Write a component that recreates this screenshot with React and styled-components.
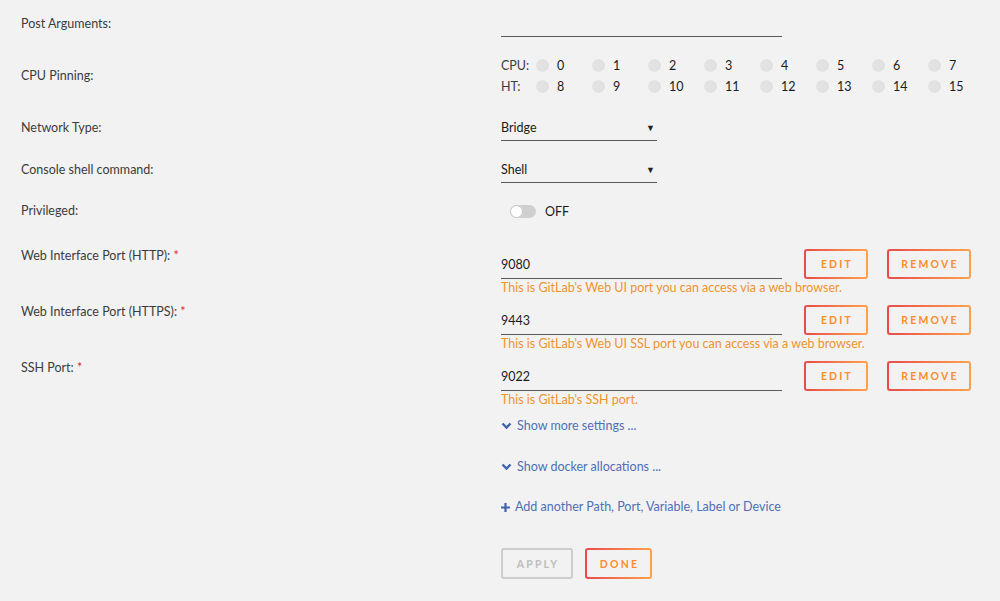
import React from 'react';
import styled, { createGlobalStyle } from 'styled-components';

const GlobalStyle = createGlobalStyle`
  html, body {
    margin: 0;
    padding: 0;
    background: #f2f2f2;
  }
  body {
    font-family: Lato, "Liberation Sans", sans-serif;
    font-size: 12.5px;
    color: #3c3c3c;
  }
`

const Page = styled.div`
  width: 1000px;
  height: 601px;
  overflow: hidden;
  background: #f2f2f2;
`
const Row = styled.div`
  display: grid;
  grid-template-columns: 480px 1fr;
  padding-left: 21px;
  align-items: ${props => props.top ? 'start' : 'center'};
  height: ${props => props.h ? props.h + 'px' : 'auto'};
  padding-top: ${props => props.pt || 0}px;
`
const Label = styled.div`
  line-height: 16px;
  margin-top: ${props => props.mt || 0}px;
`
const Star = styled.span`
  color: #e22828;
`
const Value = styled.div`
  display: flex;
  flex-direction: column;
`
const TextInput = styled.div`
  width: 281px;
  height: ${props => props.short ? 26 : 30}px;
  box-sizing: border-box;
  border-bottom: 1px solid #5a5a5a;
  display: flex;
  align-items: center;
  color: #1c1b1b;
  font-size: 12.5px;
  padding-top: ${props => props.short ? 0 : 1}px;
`
const Select = styled.div`
  width: 156px;
  height: 26px;
  box-sizing: border-box;
  border-bottom: 1px solid #5a5a5a;
  display: flex;
  align-items: center;
  justify-content: space-between;
  color: #1c1b1b;
  font-size: 12.5px;
  padding-right: 2px;
`
const Caret = styled.span`
  font-size: 9px;
  color: #222;
`
const CpuGrid = styled.div`
  display: grid;
  grid-template-columns: 35px repeat(8, 56px);
  grid-auto-rows: 21px;
  align-items: center;
  color: #3c3c3c;
`
const Cpu = styled.label`
  display: flex;
  align-items: center;
  gap: 8px;
  color: #1c1b1b;
`
const Dot = styled.span`
  width: 13px;
  height: 13px;
  border-radius: 50%;
  background: #e2e2e2;
`
const Switch = styled.div`
  display: flex;
  align-items: center;
  gap: 9px;
  padding-left: 9px;
  font-size: 12.5px;
  color: #1c1b1b;
`
const Track = styled.span`
  position: relative;
  width: 26px;
  height: 13px;
  border-radius: 7px;
  background: #cfcfcf;
`
const Knob = styled.span`
  position: absolute;
  left: 0;
  top: 0;
  width: 13px;
  height: 13px;
  border-radius: 50%;
  background: #fff;
  box-shadow: 0 0 0 1px #c4c4c4 inset;
`
const PortLine = styled.div`
  display: flex;
  align-items: flex-start;
`
const GradButton = styled.button`
  box-sizing: border-box;
  height: ${props => props.tall ? 31 : 30}px;
  width: ${props => props.w}px;
  margin-left: ${props => props.ml || 0}px;
  border: 2px solid transparent;
  border-radius: 3px;
  background:
    linear-gradient(#f2f2f2, #f2f2f2) padding-box,
    linear-gradient(90deg, #ea4a4a 0, #ffa24c) border-box;
  color: #ff8c2f;
  font-family: Lato, "Liberation Sans", sans-serif;
  font-size: 10.5px;
  font-weight: bold;
  letter-spacing: 2.2px;
  padding: 0 0 0 2px;
  cursor: pointer;
`
const GreyButton = styled(GradButton)`
  background: transparent;
  border-color: #cdcdcd;
  color: #bdbdbd;
  cursor: default;
`
const Help = styled.div`
  color: #f0922e;
  line-height: 17px;
  font-size: 12.5px;
`
const Links = styled.div`
  display: flex;
  flex-direction: column;
  padding-left: 501px;
  padding-top: 10px;
  gap: 24.5px;
`
const LinkItem = styled.a`
  display: flex;
  align-items: center;
  gap: 5px;
  color: #4f6fb7;
  line-height: 16px;
  font-size: 12.5px;
  text-decoration: none;
  cursor: pointer;
`
const Actions = styled.div`
  display: flex;
  gap: 12px;
  padding-left: 501px;
  padding-top: 33px;
`

const Chevron = () => (
  <svg width="11" height="8" viewBox="0 0 11 8">
    <path d="M1.5 1.5 L5.5 5.5 L9.5 1.5" stroke="#4062b0" strokeWidth="2.4" fill="none" />
  </svg>
)
const Plus = () => (
  <svg width="9" height="9" viewBox="0 0 9 9">
    <path d="M4.5 0 V9 M0 4.5 H9" stroke="#4062b0" strokeWidth="2.2" />
  </svg>
)

const ports = [
  { label: 'Web Interface Port (HTTP):', value: '9080', help: "This is GitLab's Web UI port you can access via a web browser." },
  { label: 'Web Interface Port (HTTPS):', value: '9443', help: "This is GitLab's Web UI SSL port you can access via a web browser." },
  { label: 'SSH Port:', value: '9022', help: "This is GitLab's SSH port." },
]

export default function App() {
  const cpus = [0, 1, 2, 3, 4, 5, 6, 7];
  return (
    <Page>
      <GlobalStyle />
      <Row h={47}>
        <Label>Post Arguments:</Label>
        <TextInput short />
      </Row>
      <Row h={58}>
        <Label>CPU Pinning:</Label>
        <CpuGrid>
          <span>CPU:</span>
          {cpus.map(n => <Cpu key={n}><Dot />{n}</Cpu>)}
          <span>HT:</span>
          {cpus.map(n => <Cpu key={n}><Dot />{n + 8}</Cpu>)}
        </CpuGrid>
      </Row>
      <Row h={46}>
        <Label>Network Type:</Label>
        <Select>Bridge<Caret>▼</Caret></Select>
      </Row>
      <Row h={38}>
        <Label>Console shell command:</Label>
        <Select>Shell<Caret>▼</Caret></Select>
      </Row>
      <Row h={44}>
        <Label>Privileged:</Label>
        <Switch><Track><Knob /></Track>OFF</Switch>
      </Row>
      {ports.map((p, i) => (
        <Row key={p.value} top pt={i === 0 ? 16 : 9}>
          <Label mt={-1}>{p.label} <Star>*</Star></Label>
          <Value>
            <PortLine>
              <TextInput>{p.value}</TextInput>
              <GradButton w={64} ml={22}>EDIT</GradButton>
              <GradButton w={84} ml={19}>REMOVE</GradButton>
            </PortLine>
            <Help>{p.help}</Help>
          </Value>
        </Row>
      ))}
      <Links>
        <LinkItem><Chevron />Show more settings ...</LinkItem>
        <LinkItem><Chevron />Show docker allocations ...</LinkItem>
        <LinkItem><Plus />Add another Path, Port, Variable, Label or Device</LinkItem>
      </Links>
      <Actions>
        <GreyButton w={72} tall>APPLY</GreyButton>
        <GradButton w={67} tall>DONE</GradButton>
      </Actions>
    </Page>
  )
}
